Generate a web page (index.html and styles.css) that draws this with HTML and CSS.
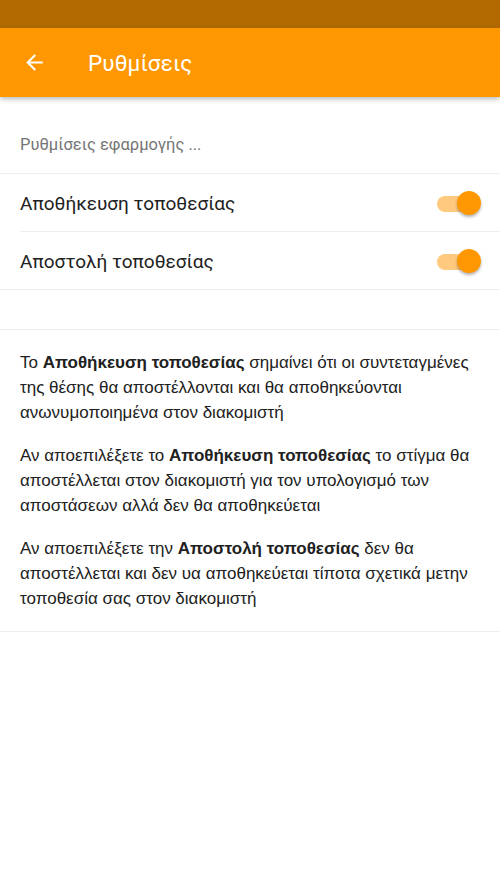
FILE: index.html
```html
<!DOCTYPE html>
<html lang="el">
<head>
<meta charset="utf-8">
<link rel="stylesheet" href="styles.css">
</head>
<body>
<div class="statusbar"></div>
<header class="appbar">
  <svg class="back" width="24" height="24" viewBox="0 0 24 24"><path d="M20 11H7.83l5.59-5.59L12 4l-8 8 8 8 1.41-1.41L7.83 13H20v-2z" fill="#fff"/></svg>
  <h1 class="title">Ρυθμίσεις</h1>
</header>
<main>
  <div class="subheader">Ρυθμίσεις εφαρμογής ...</div>
  <div class="list">
    <div class="row inset">
      <span class="label">Αποθήκευση τοποθεσίας</span>
      <span class="toggle"><span class="track"></span><span class="thumb"></span></span>
    </div>
    <div class="row">
      <span class="label">Αποστολή τοποθεσίας</span>
      <span class="toggle"><span class="track"></span><span class="thumb"></span></span>
    </div>
  </div>
  <div class="spacer"></div>
  <section class="info">
    <p>Το <b>Αποθήκευση τοποθεσίας</b> σημαίνει ότι οι συντεταγμένες της θέσης θα αποστέλλονται και θα αποθηκεύονται ανωνυμοποιημένα στον διακομιστή</p>
    <p>Αν αποεπιλέξετε το <b>Αποθήκευση τοποθεσίας</b> το στίγμα θα αποστέλλεται στον διακομιστή για τον υπολογισμό των αποστάσεων αλλά δεν θα αποθηκεύεται</p>
    <p>Αν αποεπιλέξετε την <b>Αποστολή τοποθεσίας</b> δεν θα αποστέλλεται και δεν υα αποθηκεύεται τίποτα σχετικά μετην τοποθεσία σας στον διακομιστή</p>
  </section>
</main>
</body>
</html>
```

FILE: styles.css
```css
* { box-sizing: border-box; }
html, body { margin: 0; padding: 0; background: #fff; }
body { width: 500px; font-family: Roboto, "Noto Sans", sans-serif; }
.statusbar { height: 28px; background: #b26a00; }
.appbar {
  height: 69px; background: #ff9800; display: flex; align-items: center;
  padding-left: 22px; box-shadow: 0 2px 5px rgba(0,0,0,0.28); position: relative; z-index: 1;
}
.back { width: 25px; height: 25px; }
.title { margin: 0 0 0 41px; font-weight: 400; font-size: 22.5px; color: #fff; letter-spacing: 0.1px; }
main { padding-top: 25px; }
.subheader { height: 52px; padding: 13px 20px 0; font-size: 16.5px; color: #757575; border-bottom: 1px solid #eeeeee; }
.row { height: 58px; display: flex; align-items: center; justify-content: space-between; padding: 0 19px 0 20px; position: relative; }
.row::after { content: ""; position: absolute; left: 0; right: 0; bottom: 0; height: 1px; background: #eeeeee; }
.row.inset::after { left: 20px; }
.label { font-size: 19px; color: #212121; padding-top: 1px; }
.toggle { position: relative; width: 44px; height: 26px; display: block; }
.track { position: absolute; left: 0; top: 6px; width: 34px; height: 16px; border-radius: 8px; background: #ffca80; }
.thumb { position: absolute; right: 0; top: 1px; width: 24px; height: 24px; border-radius: 50%; background: #ff9800; box-shadow: 0 2px 3px rgba(0,0,0,0.3); }
.spacer { height: 40px; border-bottom: 1px solid #eeeeee; }
.info { padding: 20px 20px 2px; border-bottom: 1px solid #eeeeee; font-family: "Liberation Sans", Arial, sans-serif; font-size: 17px; line-height: 25px; color: #212121; }
.info p { margin: 0 0 18px; }
.info b { font-weight: 700; }
```
